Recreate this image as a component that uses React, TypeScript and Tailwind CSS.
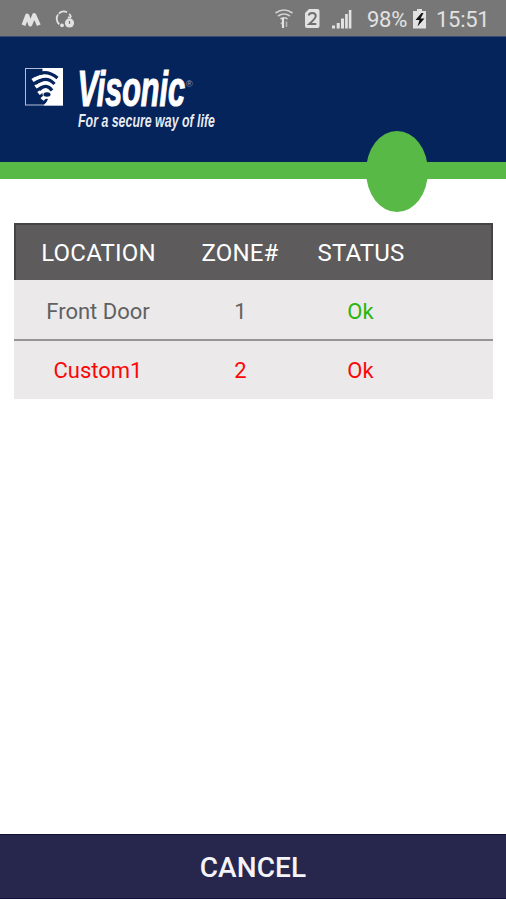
interface Zone {
  location: string;
  zone: number;
  status: string;
  alert: boolean;
}

const zones: Zone[] = [
  { location: 'Front Door', zone: 1, status: 'Ok', alert: false },
  { location: 'Custom1', zone: 2, status: 'Ok', alert: true },
];

function StatusBar() {
  return (
    <div className="h-9 shrink-0 flex items-center bg-[#777777] text-[#e2e2e2]">
      <svg className="ml-[20px] w-[22px] h-9" viewBox="20 0 22 36" fill="none" stroke="currentColor" strokeWidth="4" strokeLinejoin="round">
        <path d="M23.5 25.3 27.2 15.5 30.3 24.5 34.2 15 38.8 25.3" />
      </svg>
      <svg className="ml-[12px] w-[24px] h-9" viewBox="54 0 24 36" fill="none" stroke="currentColor" strokeWidth="1.8">
        <path d="M59.3 24.3A7.3 7.3 0 0 1 58 14.6M58.8 13.6A7.3 7.3 0 0 1 67 12.3M69.2 13.8A7.3 7.3 0 0 1 71 17" />
        <circle cx="62" cy="25.3" r="1.9" fill="currentColor" stroke="none" />
        <circle cx="69.5" cy="23" r="4.6" fill="currentColor" stroke="none" />
        <path d="M67.8 17.5h3.4" />
        <path d="M69.5 21v2.8" stroke="#777777" strokeWidth="1.3" />
      </svg>
      <div className="flex-1" />
      <svg className="w-[106px] h-9" viewBox="260 0 106 36" fill="none" stroke="currentColor" strokeWidth="1.6">
        <path d="M275.5 13Q284 7 292.5 13M278 16Q284 12 290 16M280.5 19Q284 16.5 287.5 19" strokeOpacity="0.85" />
        <path d="M283 18v10" strokeWidth="2.2" />
        <path d="M286.5 27v-5.5M280.8 24l2-2" strokeOpacity="0.6" />
        <path d="M309 9h8.5a2 2 0 0 1 2 2v15a2 2 0 0 1-2 2H307a2 2 0 0 1-2-2V13z" fill="currentColor" stroke="none" />
        <path d="M308.8 15.5Q309 13 312.3 13T315.8 16Q315.8 18.2 309.3 24H316.3" stroke="#707070" strokeWidth="2" />
        <path d="M332 25.5h3v3h-3zM336.7 23h3v5.5h-3zM341 18.5h3v10h-3zM345.1 14h2.7v14.5h-2.7zM348.8 10h2.6v18.5h-2.6z" fill="currentColor" stroke="none" />
      </svg>
      <span className="ml-px text-[22px] leading-8 tracking-[-0.3px] w-[42px] whitespace-nowrap pt-1">98%</span>
      <svg className="ml-[3px] w-[16px] h-9" viewBox="412 0 16 36">
        <path d="M417 9h5v2h4v17.5h-13V11h4z" fill="currentColor" />
        <path d="M421.5 13l-6 7h4l-2 6.5 7-8h-4l3-5.5z" fill="#111" />
      </svg>
      <span className="ml-[8px] mr-[16px] w-[54px] text-[22px] leading-8 tracking-[-0.3px] whitespace-nowrap pt-1">15:51</span>
    </div>
  );
}

function Logo() {
  return (
    <svg className="w-[230px] h-[85px]" viewBox="0 55 230 85">
      <rect x="25.5" y="68.5" width="37" height="36.5" fill="none" stroke="#b4bdd3" />
      <path d="M42.5 68H63v37.5H43.5Q47 102.5 48 99L42.5 95z" fill="#fff" />
      {/* white half of the signal, then the gaps cut over it */}
      <g fill="none" stroke="#fff" strokeWidth="3.8">
        <path d="M32.5 80.5Q39 76 47 76" />
        <path d="M35.5 87Q41 82.800 47 82.800" />
        <path d="M38.5 93.5Q43 89.600 47 89.600" />
        <path d="M42 99.5Q44.5 96.500 48 96.500" />
      </g>
      <g fill="none" stroke="#06245c" strokeWidth="3.2">
        <path d="M34 75.5Q46.5 68.5 57.500 78" />
        <path d="M35.5 83.5Q46.5 75 54.500 84" />
        <path d="M39 89.8Q46.5 82.500 52 90.500" />
      </g>
      <ellipse cx="47" cy="94.500" rx="3.500" ry="2.200" fill="#06245c" />
      <g fill="#fff" fontFamily="Liberation Sans, sans-serif" fontWeight="700" fontStyle="italic">
        <text x="77.500" y="106" fontSize="50" textLength="107.500" lengthAdjust="spacingAndGlyphs" stroke="#fff" strokeWidth="1.2">Visonic</text>
        <text x="78" y="127" fontSize="17.500" textLength="137" lengthAdjust="spacingAndGlyphs" fillOpacity="0.92">For a secure way of life</text>
      </g>
      <text x="185.800" y="86.500" fontSize="9.500" fill="#8e9bbd" fontFamily="Liberation Sans, sans-serif">®</text>
    </svg>
  );
}

function ZoneTable() {
  return (
    <table className="mx-[14px] mt-[44px] w-[479px] table-fixed border-separate border-spacing-0 text-center">
      <colgroup>
        <col className="w-[168px]" />
        <col className="w-[116px]" />
        <col className="w-[126px]" />
        <col />
      </colgroup>
      <thead>
        <tr className="h-[57px] bg-[#5d5b5c] text-[24px] tracking-[0.2px] text-white">
          <th className="p-0 pr-px font-normal border-t-2 border-l-2 border-[#454344]">LOCATION</th>
          <th className="p-0 font-normal border-t-2 border-[#454344]">ZONE#</th>
          <th className="p-0 font-normal border-t-2 border-[#454344]">STATUS</th>
          <th className="p-0 border-t-2 border-r-2 border-[#454344]" />
        </tr>
      </thead>
      <tbody className="bg-[#ebe9ea] text-[22px]">
        {zones.map(z => (
          <tr key={z.zone} className={z.alert ? 'h-[58px] text-[#fb0707]' : 'h-[61px] text-[#616161]'}>
            <td className={z.alert ? 'p-0' : 'p-0 pt-[3px] border-b-2 border-[#969495]'}>{z.location}</td>
            <td className={z.alert ? 'p-0 pl-px' : 'p-0 pt-[3px] pl-px border-b-2 border-[#969495]'}>{z.zone}</td>
            <td className={z.alert ? 'p-0 pr-px' : 'p-0 pt-[3px] pr-px border-b-2 border-[#969495] text-[#29b50b]'}>{z.status}</td>
            <td className={z.alert ? 'p-0' : 'p-0 border-b-2 border-[#969495]'} />
          </tr>
        ))}
      </tbody>
    </table>
  );
}

export default function App() {
  return (
    <div className="w-[506px] h-[900px] flex flex-col bg-white font-[Roboto,sans-serif] overflow-hidden">
      <StatusBar />
      <header className="relative shrink-0 h-[143px] bg-[#06245c] border-t border-t-[#3b4c75] border-b-[17px] border-b-[#58b947]">
        <div className="pt-[18px]">
          <Logo />
        </div>
        <div className="absolute left-[366px] top-[94px] w-[62px] h-[81px] rounded-[50%] bg-[#58b947]" />
      </header>
      <main className="flex-1">
        <ZoneTable />
      </main>
      <button className="shrink-0 h-[65px] mb-px bg-[#27264c] border-y border-[#11103a] text-[28px] font-medium tracking-[0.1px] text-[#f4f4f8] pt-[2px]">
        CANCEL
      </button>
    </div>
  );
}
